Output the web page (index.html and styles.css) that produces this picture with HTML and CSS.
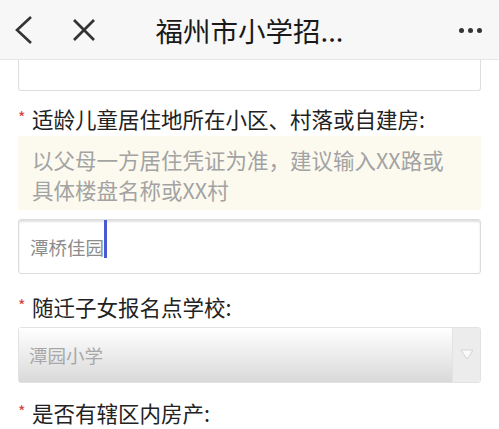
FILE: index.html
```html
<!DOCTYPE html>
<html lang="zh-CN">

<head>
  <meta charset="UTF-8">
  <meta name="viewport" content="width=device-width, initial-scale=1.0">
  <title>福州市小学招生</title>
  <link rel="stylesheet" href="styles.css">
</head>

<body>
  <div class="topbar">
    <div class="topbar_left">
      <svg class="icon_back" width="20" height="30" viewBox="0 0 20 30">
        <polyline points="17,2 3,15 17,28" fill="none" stroke="#333" stroke-width="2.6" stroke-linejoin="miter" />
      </svg>
      <svg class="icon_close" width="24" height="24" viewBox="0 0 24 24">
        <line x1="2" y1="2" x2="22" y2="22" stroke="#333" stroke-width="2.6" />
        <line x1="22" y1="2" x2="2" y2="22" stroke="#333" stroke-width="2.6" />
      </svg>
    </div>
    <div class="topbar_title">福州市小学招...</div>
    <div class="topbar_right">
      <span class="dot"></span>
      <span class="dot"></span>
      <span class="dot"></span>
    </div>
  </div>

  <div class="form">
    <div class="field_prev"></div>

    <div class="label"><span class="star">*</span>适龄儿童居住地所在小区、村落或自建房:</div>
    <div class="hint">以父母一方居住凭证为准，建议输入XX路或<br>具体楼盘名称或XX村</div>
    <div class="text_input">
      <span class="value">潭桥佳园</span>
      <span class="caret"></span>
    </div>

    <div class="label label_2"><span class="star">*</span>随迁子女报名点学校:</div>
    <div class="select">
      <div class="select_value">潭园小学</div>
      <div class="select_arrow">
        <svg width="14" height="11" viewBox="0 0 14 11">
          <polygon points="1,1 13,1 7,10" fill="#fbfbfb" stroke="#d4d4d4" stroke-width="1" />
        </svg>
      </div>
    </div>

    <div class="label label_3"><span class="star">*</span>是否有辖区内房产:</div>
  </div>
</body>

</html>
```

FILE: styles.css
```css
body {
  margin: 0;
  background-color: white;
  font-family: "Noto Sans CJK SC", "Noto Sans", sans-serif;
  color: #222;
  overflow: hidden;
}

.topbar {
  height: 59px;

  display: grid;
  grid-template-columns: 1fr auto 1fr;
  align-items: center;

  background-color: #f7f7f7;
  border-bottom: 1px solid #e6e6e6;
}

.topbar_left {
  display: flex;
  align-items: center;
  padding-left: 14px;
}

.icon_back {
  display: block;
}

.icon_close {
  display: block;
  margin-left: 38px;
}

.topbar_title {
  font-size: 27.5px;
  line-height: 34px;
  color: #1a1a1a;
}

.topbar_right {
  display: flex;
  justify-content: flex-end;
  align-items: center;
  gap: 4px;
  padding-right: 17px;
  padding-top: 2px;
}

.dot {
  width: 5px;
  height: 5px;
  border-radius: 50%;
  background-color: #333;
}

.form {
  padding: 0 18px;
}

.field_prev {
  height: 30px;
  border: 1px solid #dedede;
  border-top: none;
  border-radius: 0 0 3px 3px;
}

.label {
  margin-top: 13px;
  font-size: 21.5px;
  line-height: 30px;
  display: flex;
  align-items: flex-start;
}

.star {
  color: #d2403a;
  font-size: 16px;
  line-height: 20px;
  width: 14px;
  flex-shrink: 0;
  padding-top: 3px;
}

.hint {
  margin-top: 2px;
  padding: 9px 14px 5px;
  background-color: #fcfaef;
  font-size: 21.5px;
  line-height: 30px;
  color: #a3a3a3;
}

.text_input {
  margin-top: 9px;
  height: 53px;

  display: flex;
  align-items: center;

  border: 1px solid #dcdcdc;
  border-radius: 3px;
  box-shadow: inset 0 2px 2px rgba(0, 0, 0, 0.12);
  padding-left: 11px;
}

.value {
  font-size: 18.5px;
  color: #8c8c8c;
  line-height: 24px;
}

.caret {
  align-self: flex-start;
  width: 3px;
  height: 38px;
  background-color: #4a5ad2;
}

.label_2 {
  margin-top: 18px;
}

.select {
  margin-top: 5px;
  height: 54px;

  display: flex;

  border: 1px solid #e2e2e2;
  border-radius: 3px;
}

.select_value {
  flex: 1;
  display: flex;
  align-items: center;
  padding-left: 10px;

  font-size: 18.5px;
  color: #a8a8a8;
  background: linear-gradient(#ffffff, #d9d9d9);
}

.select_arrow {
  width: 27px;
  display: flex;
  justify-content: center;
  align-items: center;
  background-color: #ececec;
  border-left: 1px solid #e4e4e4;
}

.select_arrow svg {
  display: block;
  margin-top: -2px;
}

.label_3 {
  margin-top: 15px;
}
```
